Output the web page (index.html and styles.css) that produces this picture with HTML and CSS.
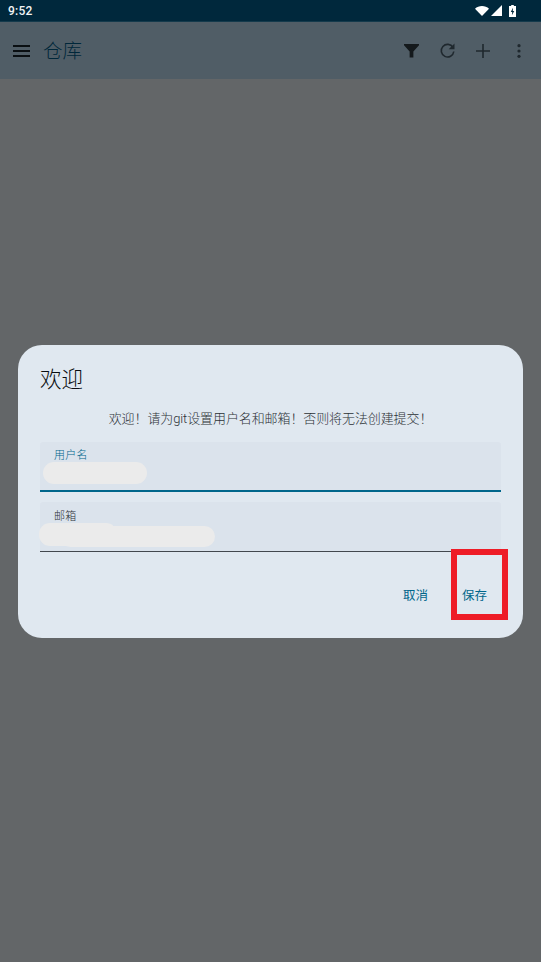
FILE: index.html
```html
<!DOCTYPE html>
<html lang="zh-CN">
<head>
  <meta charset="UTF-8" />
  <meta name="viewport" content="width=device-width, initial-scale=1.0" />
  <title>仓库</title>
  <link rel="stylesheet" href="styles.css">
</head>
<body>
  <div class="screen">
    <div class="status-bar">
      <span class="clock">9:52</span>
      <div class="status-icons">
        <svg width="14" height="10" viewBox="0 0 16 12" preserveAspectRatio="none"><path d="M0 3.2C2 1.2 5 0 8 0s6 1.2 8 3.2L8 12z" fill="#fff"/></svg>
        <svg width="11" height="11" viewBox="0 0 12 12"><path d="M12 0v12H0z" fill="#fff"/></svg>
        <svg class="battery" width="7" height="12" viewBox="0 0 8 13" preserveAspectRatio="none"><path d="M2.500 0h3v1H8v12H0V1h2.500z" fill="#fff"/><path d="M4.600 3 2 7.500h1.700L3.300 11 6 6.500H4.300z" fill="#00283c"/></svg>
      </div>
    </div>

    <header class="app-bar">
      <svg class="menu-icon" width="18" height="12" viewBox="0 0 18 12"><path d="M0 0h17v2H0zM0 5h17v2H0zM0 10h17v2H0z" fill="#0a0f12"/></svg>
      <h1 class="app-title">仓库</h1>
      <div class="actions">
        <span class="action"><svg width="15" height="15" viewBox="0 0 16 16"><path d="M0 1h16v1.500L10 9v6.500H6V9L0 2.500z" fill="#14191c"/></svg></span>
        <span class="action"><svg width="17" height="17" viewBox="0 0 17 17"><path d="M14 5.500A6.300 6.300 0 1 0 14.800 9.500" fill="none" stroke="#1f282e" stroke-width="1.600"/><path d="M15.500 1.500v5.800H9.700z" fill="#1f282e"/></svg></span>
        <span class="action"><svg width="14" height="14" viewBox="0 0 14 14"><path d="M6.200 0h1.600v6.200H14v1.600H7.800V14H6.200V7.800H0V6.200h6.200z" fill="#1f282e"/></svg></span>
        <span class="action"><svg width="4" height="14" viewBox="0 0 4 14"><circle cx="2" cy="1.700" r="1.600" fill="#1f282e"/><circle cx="2" cy="7" r="1.600" fill="#1f282e"/><circle cx="2" cy="12.300" r="1.600" fill="#1f282e"/></svg></span>
      </div>
    </header>

    <main class="backdrop">
      <section class="dialog">
        <h2 class="dialog-title">欢迎</h2>
        <p class="dialog-text">欢迎！请为git设置用户名和邮箱！否则将无法创建提交！</p>

        <div class="field field-active">
          <label class="field-label">用户名</label>
          <div class="smudge smudge-name"></div>
        </div>
        <div class="field field-idle">
          <label class="field-label">邮箱</label>
          <div class="smudge smudge-mail"></div>
          <div class="smudge smudge-mail-left"></div>
        </div>

        <div class="dialog-actions">
          <button class="text-btn">取消</button>
          <button class="text-btn">保存</button>
        </div>
        <div class="highlight"></div>
      </section>
    </main>
  </div>
</body>
</html>
```

FILE: styles.css
```css
* {
  box-sizing: border-box;
}
html, body {
  margin: 0;
  padding: 0;
}
body {
  font-family: Roboto, "Noto Sans CJK SC", sans-serif;
  background: #636668;
}
.screen {
  width: 541px;
  height: 962px;
  display: flex;
  flex-direction: column;
  overflow: hidden;
}

/* status bar */
.status-bar {
  height: 22px;
  background: #00283c;
  border-bottom: 1px solid #143a4c;
  display: flex;
  align-items: center;
  justify-content: space-between;
  padding: 0 25px 0 8px;
}
.clock {
  color: #f2f4f5;
  font-size: 12px;
  font-weight: 500;
  letter-spacing: 0.2px;
}
.status-icons {
  display: flex;
  align-items: center;
  gap: 2px;
}
.battery {
  margin-left: 5px;
}

/* app bar */
.app-bar {
  height: 57px;
  background: #505d66;
  display: flex;
  align-items: center;
  padding: 0 4px 2px 13px;
}
.menu-icon {
  margin-right: 12px;
  margin-top: 2px;
}
.app-title {
  margin: 0;
  font-size: 19.5px;
  font-weight: 300;
  color: #00273a;
}
.actions {
  margin-left: auto;
  display: flex;
  align-items: center;
  margin-top: 2px;
}
.action {
  width: 36px;
  display: flex;
  justify-content: center;
}

/* dialog */
.backdrop {
  flex: 1;
  background: #636668;
  padding: 266px 18px 0;
}
.dialog {
  position: relative;
  height: 293px;
  background: #e0e8f0;
  border-radius: 24px;
  padding: 20px 22px 0;
}
.dialog-title {
  margin: 0;
  font-size: 21.5px;
  line-height: 30px;
  font-weight: 300;
  color: #0a0e11;
}
.dialog-text {
  margin: 15px 0 14px;
  font-size: 13px;
  line-height: 18px;
  font-weight: 300;
  text-align: center;
  letter-spacing: -0.1px;
  color: #2c3136;
}
.field {
  position: relative;
  height: 50px;
  margin-bottom: 10px;
  background: #dbe3ec;
  border-bottom: 1px solid #43484e;
  border-radius: 3px 3px 0 0;
  padding: 7px 14px 0;
}
.field-active {
  border-bottom: 2px solid #00668b;
}
.field-idle {
  padding-top: 8px;
}
.field-label {
  display: block;
  font-size: 11px;
  font-weight: 300;
  line-height: 14px;
  letter-spacing: 0.3px;
  color: #2c3136;
}
.field-active .field-label {
  color: #00668b;
}

/* painted-over values in the screenshot */
.smudge {
  position: absolute;
  background: #ebebeb;
  border-radius: 11px;
}
.smudge-name {
  left: 3px;
  top: 20px;
  width: 104px;
  height: 22px;
}
.smudge-mail {
  left: 20px;
  top: 24px;
  width: 155px;
  height: 21px;
}
.smudge-mail-left {
  left: -1px;
  top: 21px;
  width: 78px;
  height: 23px;
}
.dialog-actions {
  display: flex;
  justify-content: flex-end;
  gap: 10px;
  margin-top: 27px;
  margin-right: 2px;
}
.text-btn {
  border: none;
  background: none;
  padding: 8px 12px;
  font-family: inherit;
  font-size: 12.5px;
  line-height: 18px;
  color: #00668b;
}
.highlight {
  position: absolute;
  left: 433px;
  top: 204px;
  width: 57px;
  height: 71px;
  border: 6px solid #ee1c27;
}
```
